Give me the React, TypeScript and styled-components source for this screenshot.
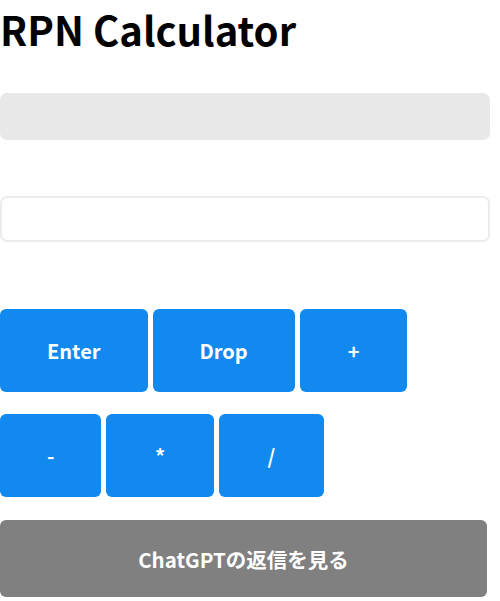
import React, { useState } from "react";
import styled, { createGlobalStyle } from "styled-components";

const GlobalStyle = createGlobalStyle`
    html, body {
        margin: 0;
        padding: 0;
        background: #ffffff;
    }
    body {
        font-family: "Noto Sans CJK JP", "Noto Sans", sans-serif;
    }
`;

const Page = styled.div`
    width: 490px;
    display: flex;
    flex-direction: column;
`;

const Title = styled.h1`
    margin: 0;
    font-size: 40px;
    line-height: 58px;
    font-weight: 700;
    color: #000;
`;

const StackView = styled.div`
    margin-top: 35px;
    height: 47px;
    border-radius: 7px;
    background: #e8e8e8;
`;

const NumberInput = styled.input`
    margin-top: 56px;
    height: 46px;
    box-sizing: border-box;
    border: 2px solid #ececec;
    border-radius: 7px;
    padding: 0 12px;
    font-family: inherit;
    font-size: 18px;
    outline: none;
    background: #fff;
`;

const Keys = styled.div`
    margin-top: 67px;
    display: flex;
    flex-wrap: wrap;
    column-gap: 5px;
    row-gap: 22px;
`;

const Key = styled.button<{ $extra: number }>`
    height: 83px;
    padding: 0 ${({ $extra }) => 47 + $extra}px;
    border: none;
    border-radius: 6px;
    background: #1289ee;
    color: #fff;
    font-family: inherit;
    font-size: 20px;
    font-weight: 700;
    cursor: pointer;
`;

const AskButton = styled.button`
    margin-top: 23px;
    width: 487px;
    height: 77px;
    border: none;
    border-radius: 6px;
    background: #808080;
    color: #fff;
    font-family: inherit;
    font-size: 20.5px;
    font-weight: 700;
    cursor: pointer;
`;

const keys = [
    { label: "Enter", extra: 0 },
    { label: "Drop", extra: 0 },
    { label: "+", extra: 1 },
    { label: "-", extra: 0 },
    { label: "*", extra: 1.5 },
    { label: "/", extra: 2 },
];

export default function App() {
    const [value, setValue] = useState("");
    return (
        <>
            <GlobalStyle />
            <Page>
                <Title>RPN Calculator</Title>
                <StackView />
                <NumberInput value={value} onChange={e => setValue(e.target.value)} />
                <Keys>
                    {keys.map(k => (
                        <Key key={k.label} $extra={k.extra}>{k.label}</Key>
                    ))}
                </Keys>
                <AskButton>ChatGPTの返信を見る</AskButton>
            </Page>
        </>
    );
}
